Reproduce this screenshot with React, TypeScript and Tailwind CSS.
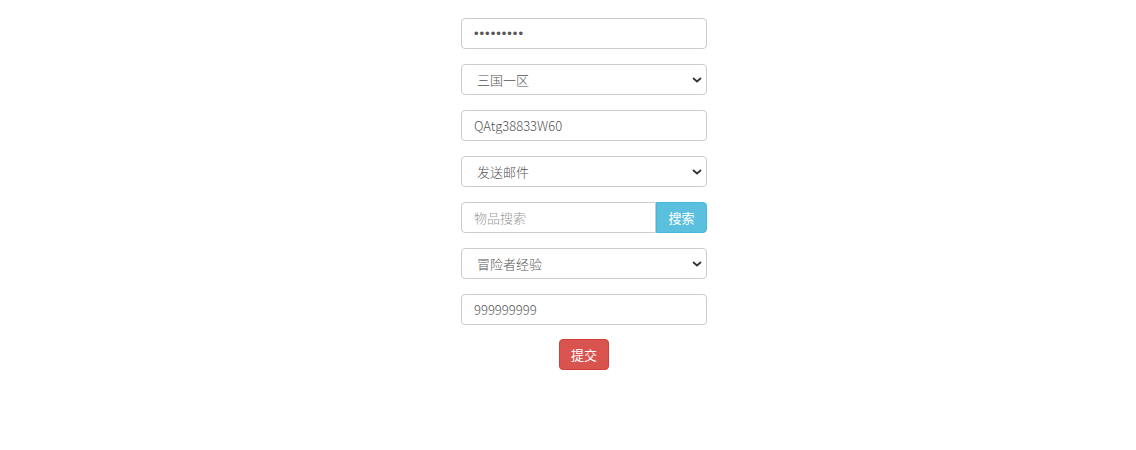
import { useState } from "react";

const font = { fontFamily: '"Noto Sans CJK SC", "Noto Sans", sans-serif' };

function Chevron() {
  return (
    <svg
      viewBox="0 0 10 6"
      className="pointer-events-none absolute right-[5px] top-1/2 h-[6px] w-[10px] -translate-y-1/2"
    >
      <path d="M1 1l4 3.5L9 1" fill="none" stroke="#333" strokeWidth="1.8" />
    </svg>
  );
}

function Select({ value, options }: { value: string; options: string[] }) {
  const [v, setV] = useState(value);
  return (
    <div className="relative">
      <select
        value={v}
        onChange={(e) => setV(e.target.value)}
        className="h-[31px] w-full appearance-none rounded-[4px] border border-[#ccc] bg-white pl-[15px] pr-6 text-[13px] font-light text-[#555] outline-none"
      >
        {options.map((o) => (
          <option key={o}>{o}</option>
        ))}
      </select>
      <Chevron />
    </div>
  );
}

export default function App() {
  return (
    <div className="min-h-[450px] bg-white" style={font}>
      <form className="ml-[461px] flex w-[246px] flex-col gap-[15px] pt-[18px]">
        <input
          type="password"
          defaultValue="123456789"
          className="h-[31px] w-full rounded-[4px] border border-[#ccc] bg-white px-3 font-['Liberation_Sans',sans-serif] text-[13px] tracking-[1px] text-[#555] outline-none"
        />
        <Select value="三国一区" options={["三国一区", "三国二区"]} />
        <input
          type="text"
          defaultValue="QAtg38833W60"
          className="h-[31px] w-full rounded-[4px] border border-[#ccc] bg-white px-3 text-[13px] font-light text-[#555] outline-none"
        />
        <Select value="发送邮件" options={["发送邮件", "发送物品"]} />
        <div className="flex h-[31px]">
          <input
            type="text"
            placeholder="物品搜索"
            className="h-full min-w-0 flex-1 rounded-l-[4px] border border-[#ccc] bg-white px-3 text-[13px] font-light text-[#555] outline-none placeholder:text-[#999]"
          />
          <button
            type="button"
            className="h-full w-[51px] rounded-r-[4px] border border-[#46b8da] bg-[#5bc0de] text-[13px] text-white"
          >
            搜索
          </button>
        </div>
        <Select value="冒险者经验" options={["冒险者经验", "金币"]} />
        <input
          type="text"
          defaultValue="999999999"
          className="h-[31px] w-full rounded-[4px] border border-[#ccc] bg-white px-3 text-[13px] font-light text-[#555] outline-none"
        />
        <div className="-mt-px flex justify-center">
          <button
            type="button"
            className="h-[31px] w-[50px] rounded-[4px] border border-[#d43f3a] bg-[#d9534f] text-[13px] text-white"
          >
            提交
          </button>
        </div>
      </form>
    </div>
  );
}
